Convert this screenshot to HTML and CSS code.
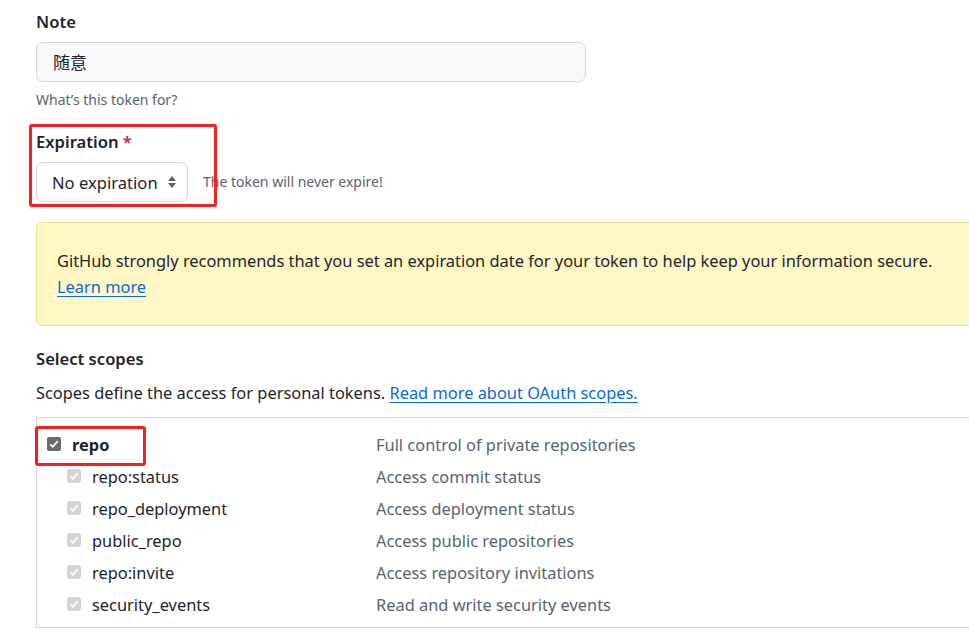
FILE: index.html
```html
<!DOCTYPE html>
<html lang="zh">
<head>
<meta charset="utf-8">
<link rel="stylesheet" href="styles.css">
</head>
<body>
<div class="page">
  <div class="field">
    <label class="label">Note</label>
    <div class="input">随意</div>
    <div class="hint">What’s this token for?</div>
  </div>

  <div class="field expiration">
    <label class="label">Expiration <span class="req">*</span></label>
    <div class="select-row">
      <div class="select">No expiration
        <svg class="updown" width="10" height="14" viewBox="0 0 10 14"><path d="M5 1 L9 6 H1 Z M5 13 L9 8 H1 Z" fill="#59636e"/></svg>
      </div>
      <span class="hint inline">The token will never expire!</span>
    </div>
    <div class="annot annot-exp"></div>
  </div>

  <div class="flash">
    <p>GitHub strongly recommends that you set an expiration date for your token to help keep your information secure.</p>
    <a class="link" href="#">Learn more</a>
  </div>

  <h3 class="label scopes-title">Select scopes</h3>
  <p class="scopes-desc">Scopes define the access for personal tokens. <a class="link" href="#">Read more about OAuth scopes.</a></p>

  <div class="scopes">
    <div class="scope-row main">
      <span class="cb checked"><svg viewBox="0 0 14 14" width="14" height="14"><path d="M3.2 7.3 L5.8 9.8 L10.8 4.2" fill="none" stroke="#fff" stroke-width="1.8"/></svg></span>
      <span class="name strong">repo</span>
      <span class="desc">Full control of private repositories</span>
      <div class="annot annot-repo"></div>
    </div>
    <div class="scope-row sub">
      <span class="cb disabled"><svg viewBox="0 0 14 14" width="14" height="14"><path d="M3.2 7.3 L5.8 9.8 L10.8 4.2" fill="none" stroke="#fff" stroke-width="1.8"/></svg></span>
      <span class="name">repo:status</span>
      <span class="desc">Access commit status</span>
    </div>
    <div class="scope-row sub">
      <span class="cb disabled"><svg viewBox="0 0 14 14" width="14" height="14"><path d="M3.2 7.3 L5.8 9.8 L10.8 4.2" fill="none" stroke="#fff" stroke-width="1.8"/></svg></span>
      <span class="name">repo_deployment</span>
      <span class="desc">Access deployment status</span>
    </div>
    <div class="scope-row sub">
      <span class="cb disabled"><svg viewBox="0 0 14 14" width="14" height="14"><path d="M3.2 7.3 L5.8 9.8 L10.8 4.2" fill="none" stroke="#fff" stroke-width="1.8"/></svg></span>
      <span class="name">public_repo</span>
      <span class="desc">Access public repositories</span>
    </div>
    <div class="scope-row sub">
      <span class="cb disabled"><svg viewBox="0 0 14 14" width="14" height="14"><path d="M3.2 7.3 L5.8 9.8 L10.8 4.2" fill="none" stroke="#fff" stroke-width="1.8"/></svg></span>
      <span class="name">repo:invite</span>
      <span class="desc">Access repository invitations</span>
    </div>
    <div class="scope-row sub">
      <span class="cb disabled"><svg viewBox="0 0 14 14" width="14" height="14"><path d="M3.2 7.3 L5.8 9.8 L10.8 4.2" fill="none" stroke="#fff" stroke-width="1.8"/></svg></span>
      <span class="name">security_events</span>
      <span class="desc">Read and write security events</span>
    </div>
  </div>
</div>
</body>
</html>
```
FILE: styles.css
```css
html, body {
  margin: 0;
  padding: 0;
  background: #ffffff;
  overflow: hidden;
}
body {
  font-family: "Noto Sans", "Noto Sans CJK SC", sans-serif;
  font-size: 16.4px;
  color: #1f2328;
  width: 969px;
  height: 639px;
}
.page {
  padding: 9px 0 0 36px;
  width: 1100px;
}
.field {
  position: relative;
}
.label {
  display: block;
  font-weight: 600;
  font-size: 16.6px;
  line-height: 26px;
  margin: 0;
}
.req {
  color: #cf222e;
}
.input {
  margin-top: 7px;
  width: 532px;
  height: 38px;
  border: 1px solid #d1d9e0;
  border-radius: 7px;
  background: #f6f8fa;
  padding: 0 0 0 16px;
  line-height: 38px;
  font-size: 17px;
  font-family: "Noto Sans CJK SC", sans-serif;
}
.hint {
  font-size: 14px;
  color: #59636e;
  line-height: 20px;
  margin-top: 8px;
}
.hint.inline {
  margin: 0 0 0 15px;
}
.expiration {
  margin-top: 19px;
}
.select-row {
  display: flex;
  align-items: center;
  margin-top: 7px;
}
.select {
  display: flex;
  align-items: center;
  box-sizing: border-box;
  width: 152px;
  height: 40px;
  border: 1px solid #d1d9e0;
  border-radius: 7px;
  padding: 0 10px 0 15px;
  justify-content: space-between;
  font-size: 16.6px;
}
.annot {
  position: absolute;
  border: 3px solid #fa1e1e;
  border-radius: 3px;
  pointer-events: none;
}
.annot-exp {
  left: -7px;
  top: -5px;
  width: 182px;
  height: 77px;
}
.flash {
  margin-top: 20px;
  background: #fff8c5;
  border: 1px solid #ecd98a;
  border-radius: 7px;
  padding: 25px 20px;
  line-height: 26px;
}
.flash p {
  margin: 0;
}
.link {
  color: #0969da;
  text-decoration: underline;
  text-underline-offset: 3px;
}
.scopes-title {
  margin-top: 20px;
}
.scopes-desc {
  margin: 8px 0 0;
  line-height: 26px;
}
.scopes {
  margin-top: 11px;
  border-top: 1px solid #d1d9e0;
  border-left: 1px solid #d1d9e0;
  border-bottom: 1px solid #d1d9e0;
  padding: 10px 0 7px;
}
.scope-row {
  position: relative;
  display: flex;
  align-items: center;
  height: 32px;
}
.cb {
  display: inline-flex;
  width: 14px;
  height: 14px;
  border-radius: 2px;
  box-sizing: border-box;
}
.cb.checked {
  background: #6b6b6b;
  margin-left: 10px;
}
.cb.disabled {
  background: #d4d4d4;
  margin-left: 30px;
}
.name {
  margin-left: 11px;
}
.strong {
  font-weight: 700;
}
.desc {
  position: absolute;
  left: 339px;
  color: #59636e;
}
.annot-repo {
  left: -2px;
  top: -2px;
  width: 105px;
  height: 34px;
}
```
